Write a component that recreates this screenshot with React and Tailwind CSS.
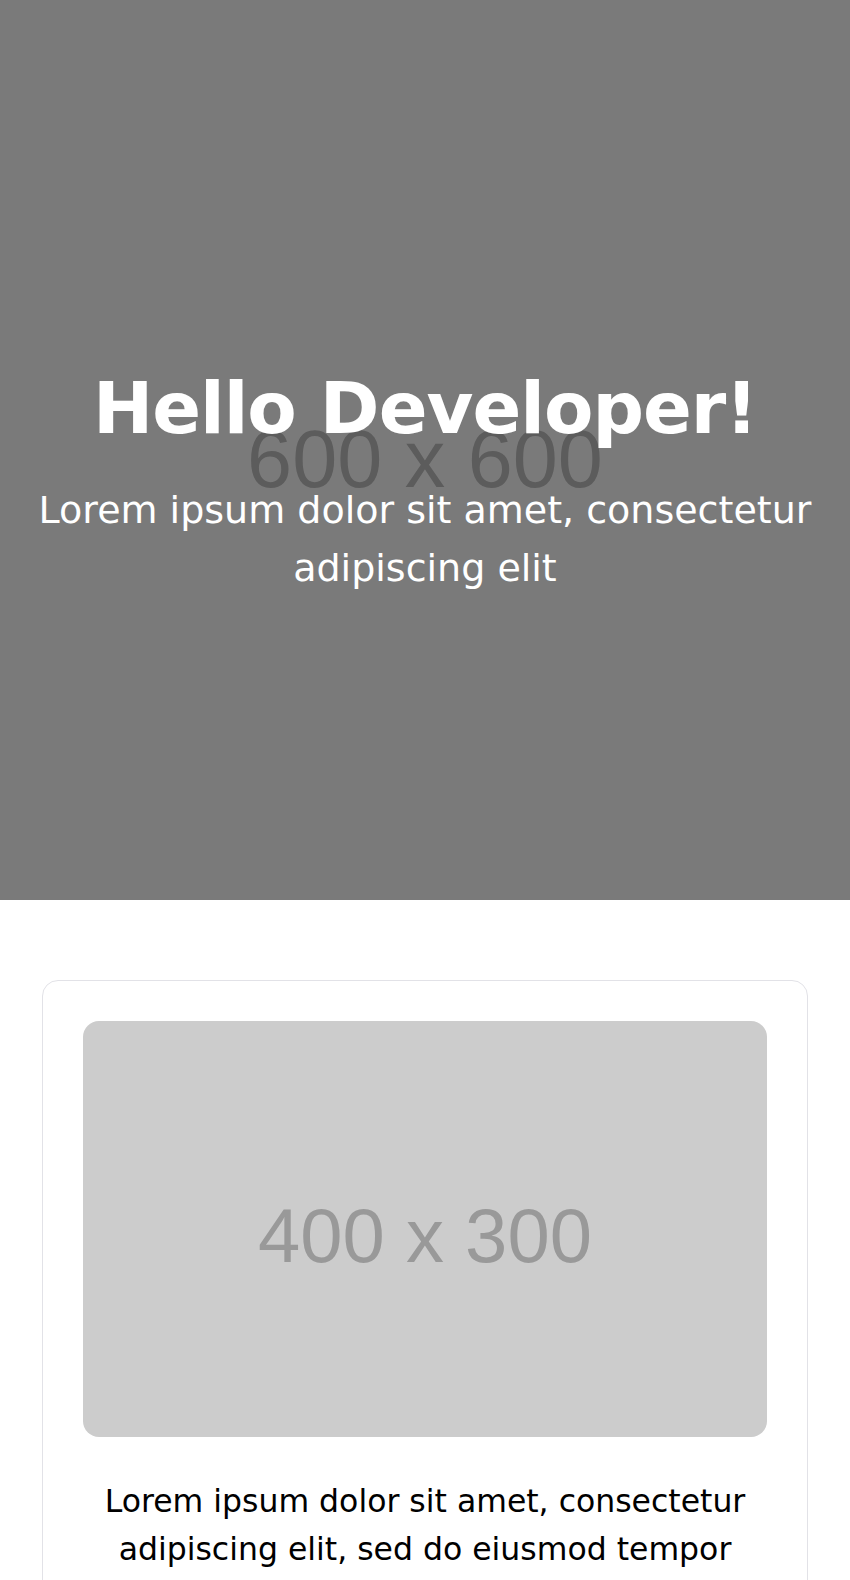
import React from "react";

// Placeholder picture: grey block with its size written in the middle
function Placeholder({ label, className, textClass }) {
  return (
    <div className={`flex items-center justify-center bg-[#cccccc] ${className}`}>
      <span className={`font-['Liberation_Sans',Arial,sans-serif] leading-none text-[#999999] ${textClass}`}>
        {label}
      </span>
    </div>
  );
}

export default function App() {
  return (
    <div className="min-h-screen bg-white font-['DejaVu_Sans',sans-serif]">
      {/* Hero */}
      <section className="relative h-[900px] overflow-hidden">
        <Placeholder
          label="600 x 600"
          className="absolute inset-0"
          textClass="mt-[19px] text-[81px]"
        />
        <div className="absolute inset-0 bg-black/40" />
        <div className="relative flex h-full flex-col items-center justify-center px-6 pt-[62px] text-center text-white">
          <h1 className="text-[72px] font-bold leading-[1.2] tracking-[-1px]">Hello Developer!</h1>
          <p className="mt-[31px] text-[38px] leading-[57.6px]">
            Lorem ipsum dolor sit amet, consectetur adipiscing elit
          </p>
        </div>
      </section>

      {/* Card */}
      <section className="pt-20 pb-20">
        <div className="mx-[42px] rounded-2xl border border-[#e2e2e7] p-10">
          <Placeholder
            label="400 x 300"
            className="h-[416px] w-full rounded-2xl"
            textClass="mt-[13px] text-[76px]"
          />
          <p className="mt-10 text-center text-[31.5px] leading-[48px] text-black">
            Lorem ipsum dolor sit amet, consectetur adipiscing elit, sed do eiusmod tempor
            incididunt ut labore et dolore magna aliqua.
          </p>
        </div>
      </section>
    </div>
  );
}
